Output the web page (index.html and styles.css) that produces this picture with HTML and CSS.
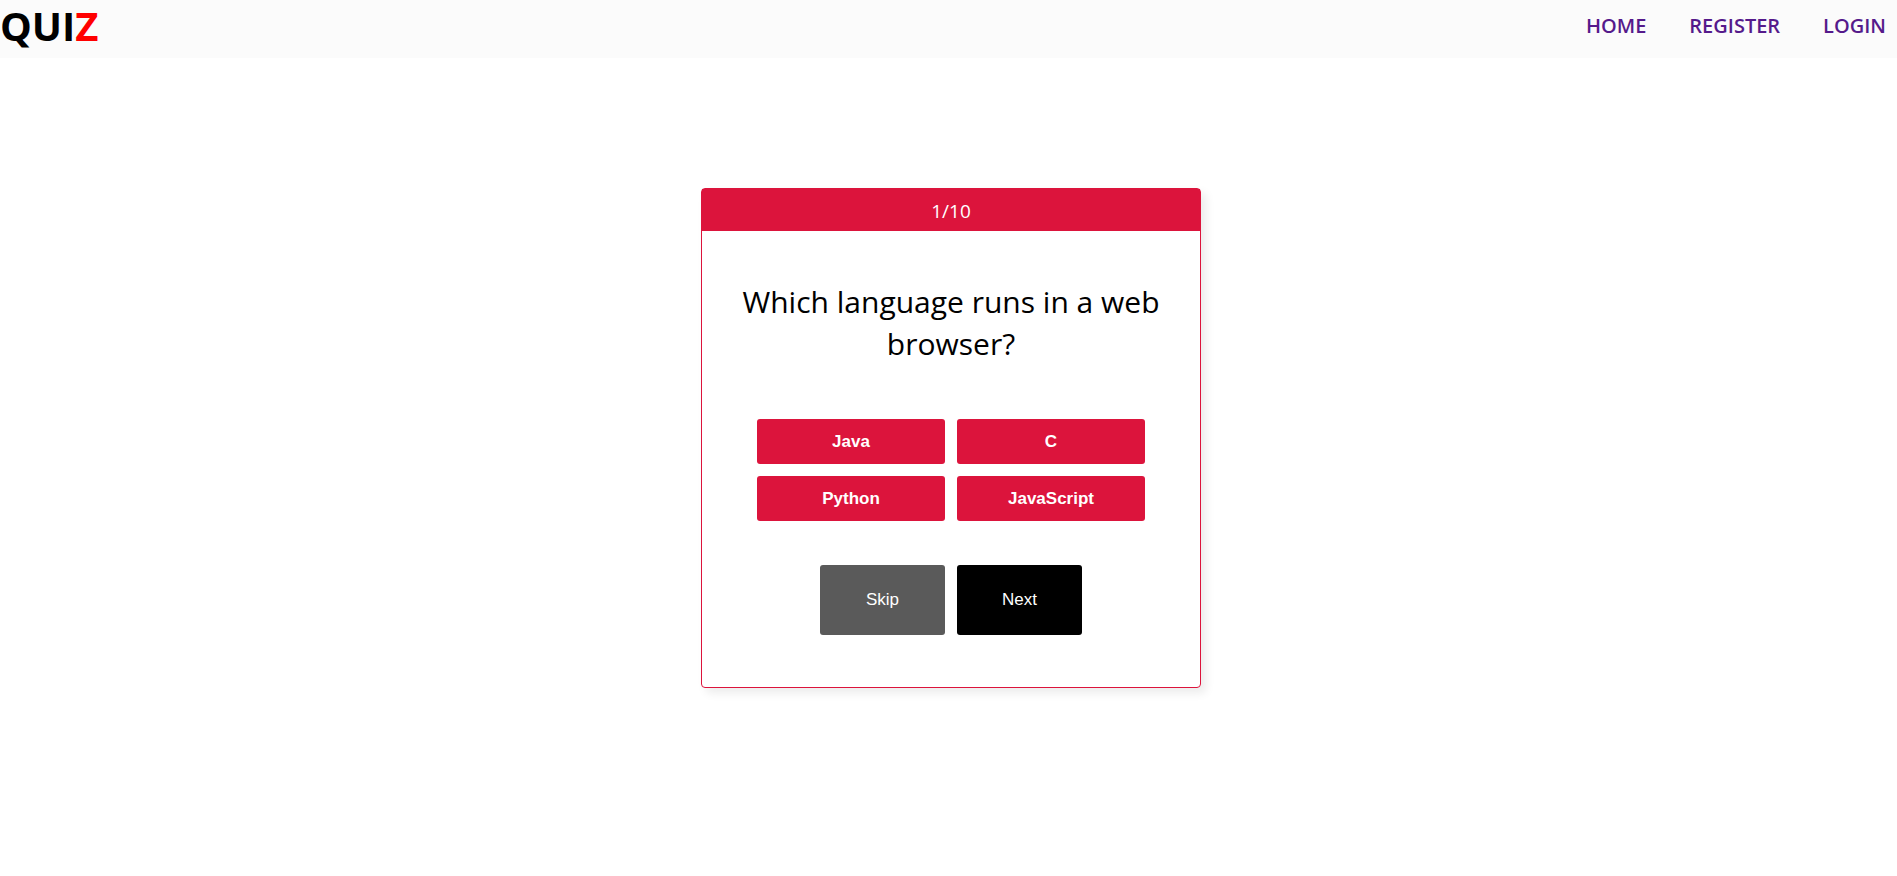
FILE: index.html
```html
<!DOCTYPE html>
<html lang="en">
<head>
<meta charset="utf-8">
<meta name="viewport" content="width=device-width, initial-scale=1">
<title>Quiz</title>
<link rel="stylesheet" href="styles.css">
</head>
<body>
<header class="navbar">
  <h1 class="logo">QUI<span class="logo-accent">Z</span></h1>
  <nav class="nav-links">
    <a href="#home">HOME</a>
    <a href="#register">REGISTER</a>
    <a href="#login">LOGIN</a>
  </nav>
</header>
<main class="page">
  <section class="card">
    <p class="progress">1/10</p>
    <div class="card-body">
      <h2 class="question">Which language runs in a web browser?</h2>
      <div class="options">
        <button class="option" type="button">Java</button>
        <button class="option" type="button">C</button>
        <button class="option" type="button">Python</button>
        <button class="option" type="button">JavaScript</button>
      </div>
      <div class="actions">
        <button class="action skip" type="button">Skip</button>
        <button class="action next" type="button">Next</button>
      </div>
    </div>
  </section>
</main>
</body>
</html>
```
FILE: styles.css
```css
* {
  box-sizing: border-box;
  margin: 0;
}

body {
  display: flex;
  flex-direction: column;
  min-height: 100vh;
  background: #fff;
  color: #000;
  font-family: "Segoe UI", "Open Sans", "Noto Sans", sans-serif;
}

.navbar {
  display: flex;
  justify-content: space-between;
  align-items: center;
  padding: 0 11px 6px 0;
  background: #fbfbfb;
}

.logo {
  font-size: 40px;
  line-height: 52px;
  font-weight: 700;
}

.logo-accent {
  color: #f00;
}

.nav-links {
  display: flex;
  gap: 43px;
}

.nav-links a {
  color: #551a8b;
  font-size: 20px;
  font-weight: 600;
  line-height: 28px;
  text-decoration: none;
}

.page {
  flex: 1;
  display: flex;
  justify-content: center;
  align-items: flex-start;
  padding: 130px 0 40px 5px;
}

.card {
  width: 100%;
  max-width: 500px;
  border: 1px solid #dc143c;
  border-radius: 4px;
  box-shadow: 5px 5px 10px rgba(0, 0, 0, 0.08);
}

.progress {
  padding: 9px 8px 7px;
  background: #dc143c;
  color: #fff;
  font-size: 19px;
  line-height: 26px;
  text-align: center;
}

.card-body {
  display: flex;
  flex-direction: column;
  align-items: center;
  padding: 50px 32px 52px;
}

.question {
  font-size: 30px;
  font-weight: 400;
  line-height: 42px;
  text-align: center;
}

.options {
  display: grid;
  grid-template-columns: repeat(2, 188px);
  gap: 12px;
  margin-top: 54px;
}

.option,
.action {
  border: 0;
  border-radius: 3px;
  color: #fff;
  font-family: Arial, "Liberation Sans", sans-serif;
  font-size: 17px;
  cursor: pointer;
}

.option {
  height: 45px;
  background: #dc143c;
  font-weight: 700;
}

.actions {
  display: flex;
  gap: 12px;
  margin-top: 44px;
}

.action {
  width: 125px;
  height: 70px;
}

.skip {
  background: #5a5a5a;
}

.next {
  background: #000;
}
```
